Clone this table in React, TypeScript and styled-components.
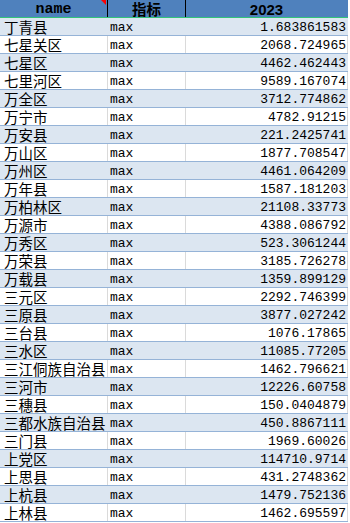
import React from "react";
import styled, { createGlobalStyle } from "styled-components";

const Global = createGlobalStyle`
  html, body { margin: 0; padding: 0; background: #ffffff; }
  body { width: 350px; height: 523px; overflow: hidden; }
`;

const rows: [string, string][] = [
  ["丁青县", "1.683861583"],
  ["七星关区", "2068.724965"],
  ["七星区", "4462.462443"],
  ["七里河区", "9589.167074"],
  ["万全区", "3712.774862"],
  ["万宁市", "4782.91215"],
  ["万安县", "221.2425741"],
  ["万山区", "1877.708547"],
  ["万州区", "4461.064209"],
  ["万年县", "1587.181203"],
  ["万柏林区", "21108.33773"],
  ["万源市", "4388.086792"],
  ["万秀区", "523.3061244"],
  ["万荣县", "3185.726278"],
  ["万载县", "1359.899129"],
  ["三元区", "2292.746399"],
  ["三原县", "3877.027242"],
  ["三台县", "1076.17865"],
  ["三水区", "11085.77205"],
  ["三江侗族自治县", "1462.796621"],
  ["三河市", "12226.60758"],
  ["三穗县", "150.0404879"],
  ["三都水族自治县", "450.8867111"],
  ["三门县", "1969.60026"],
  ["上党区", "114710.9714"],
  ["上思县", "431.2748362"],
  ["上杭县", "1479.752136"],
  ["上林县", "1462.695597"],
];

const Sheet = styled.div`
  width: 348px;
  display: flex;
  flex-direction: column;
`;

const HeaderRow = styled.div`
  display: grid;
  grid-template-columns: 108px 78px 162px;
  height: 17px;
  background: #4f81bd;
  border-bottom: 1px solid #33c47a;
`;

const HeadCell = styled.div<{ $last?: boolean }>`
  position: relative;
  display: flex;
  align-items: center;
  justify-content: center;
  height: 17px;
  border-right: 1px solid ${(p) => (p.$last ? "#4f81bd" : "#000000")};
  box-sizing: border-box;
  color: #000;
  font-weight: bold;
`;

const HeadMono = styled.span`
  font-family: "Liberation Mono", monospace;
  font-size: 15px;
  line-height: 17px;
  padding-top: 1px;
`;

const HeadCjk = styled.span`
  font-family: "Noto Sans CJK SC", sans-serif;
  font-size: 14.5px;
  line-height: 17px;
`;

const HeadSans = styled.span`
  font-family: "Liberation Sans", sans-serif;
  font-size: 15px;
  line-height: 17px;
  padding-top: 2px;
`;

const CommentMark = styled.span`
  position: absolute;
  top: 0;
  right: 1px;
  width: 0;
  height: 0;
  border-top: 5px solid #ff0000;
  border-left: 5px solid transparent;
`;

const Row = styled.div<{ $shade: boolean }>`
  display: grid;
  grid-template-columns: 108px 78px 162px;
  height: 17px;
  background: ${(p) => (p.$shade ? "#dce6f1" : "#ffffff")};
  border-bottom: 1px solid #95b3d7;
`;

const Cell = styled.div<{ $shade: boolean; $align?: "left" | "right" }>`
  height: 17px;
  box-sizing: border-box;
  border-right: 1px solid ${(p) => (p.$shade ? "#dce6f1" : "#dadada")};
  display: flex;
  align-items: flex-end;
  justify-content: ${(p) => (p.$align === "right" ? "flex-end" : "flex-start")};
  white-space: nowrap;
  overflow: visible;
  color: #000;
`;

const NameText = styled.span`
  font-family: "Noto Sans CJK SC", sans-serif;
  font-size: 14.5px;
  line-height: 17px;
  padding-left: 4px;
  position: relative;
  z-index: 1;
`;

const MonoText = styled.span<{ $pad: "left" | "right" }>`
  font-family: "Liberation Mono", monospace;
  font-size: 13px;
  line-height: 13px;
  padding-bottom: 1px;
  ${(p) => (p.$pad === "left" ? "padding-left: 2px;" : "padding-right: 1px;")}
`;

export default function App() {
  return (
    <>
      <Global />
      <Sheet>
        <HeaderRow>
          <HeadCell>
            <HeadMono>name</HeadMono>
            <CommentMark />
          </HeadCell>
          <HeadCell>
            <HeadCjk>指标</HeadCjk>
          </HeadCell>
          <HeadCell $last>
            <HeadSans>2023</HeadSans>
          </HeadCell>
        </HeaderRow>
        {rows.map(([name, value], i) => {
          const shade = i % 2 === 0;
          return (
            <Row key={name} $shade={shade}>
              <Cell $shade={shade}>
                <NameText>{name}</NameText>
              </Cell>
              <Cell $shade={shade}>
                <MonoText $pad="left">max</MonoText>
              </Cell>
              <Cell $shade={shade} $align="right">
                <MonoText $pad="right">{value}</MonoText>
              </Cell>
            </Row>
          );
        })}
      </Sheet>
    </>
  );
}
